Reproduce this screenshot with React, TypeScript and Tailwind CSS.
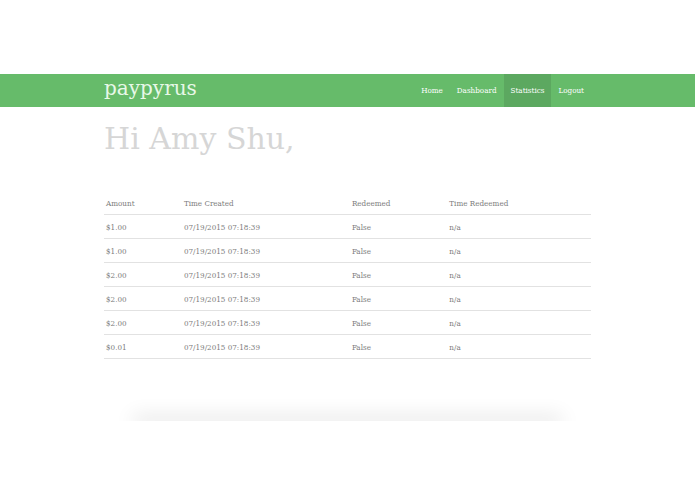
const NAV_LINKS = [
  { label: "Home", active: false },
  { label: "Dashboard", active: false },
  { label: "Statistics", active: true },
  { label: "Logout", active: false },
]

const COLUMNS = [
  { label: "Amount", width: "w-[16%]" },
  { label: "Time Created", width: "w-[34.5%]" },
  { label: "Redeemed", width: "w-[20%]" },
  { label: "Time Redeemed", width: "w-[29.5%]" },
]

const AMOUNTS = ["$1.00", "$1.00", "$2.00", "$2.00", "$2.00", "$0.01"]

const ROWS = AMOUNTS.map((amount) => ({
  amount,
  created: "07/19/2015 07:18:39",
  redeemed: "False",
  redeemedAt: "n/a",
}))

function Header() {
  return (
    <header className="bg-[#66bb6a] text-white">
      <div className="mx-auto flex max-w-[487px] justify-between">
        <a href="#" className="h-[33px] text-[20px] leading-[28px] text-[#e8f8e8]">
          paypyrus
        </a>
        <nav className="flex font-['DejaVu_Serif_Condensed','DejaVu_Serif',serif] text-[8px] leading-[33px]">
          {NAV_LINKS.map(({ label, active }) => (
            <a
              key={label}
              href="#"
              aria-current={active ? "page" : undefined}
              className={active ? "bg-[#5ca860] px-[7px]" : "px-[7px]"}
            >
              {label}
            </a>
          ))}
        </nav>
      </div>
    </header>
  )
}

function TransactionTable() {
  return (
    <table className="mt-8 w-full table-fixed border-collapse text-left font-['DejaVu_Serif_Condensed','DejaVu_Serif',serif] text-[8px] text-[#7c7c7c]">
      <thead>
        <tr className="h-6 border-b border-[#e2e2e2]">
          {COLUMNS.map(({ label, width }) => (
            <th key={label} scope="col" className={`${width} px-[2px] pt-1 font-normal`}>
              {label}
            </th>
          ))}
        </tr>
      </thead>
      <tbody>
        {ROWS.map((row, i) => (
          <tr key={i} className="h-6 border-b border-[#e2e2e2]">
            <td className="px-[2px] pt-1">{row.amount}</td>
            <td className="px-[2px] pt-1">{row.created}</td>
            <td className="px-[2px] pt-1">{row.redeemed}</td>
            <td className="px-[2px] pt-1">{row.redeemedAt}</td>
          </tr>
        ))}
      </tbody>
    </table>
  )
}

export default function App() {
  return (
    <div className="min-h-screen bg-white pt-[74px] font-['DejaVu_Serif',serif]">
      <Header />
      <main className="mx-auto max-w-[487px]">
        <h1 className="pt-[13px] text-[30px] leading-[38px] text-[#d6d6d6]">Hi Amy Shu,</h1>
        <TransactionTable />
        {/* Only the top of the footer's shadow shows */}
        <div className="mt-[22px] overflow-hidden px-8 pt-10">
          <div className="shadow-[0_0_20px_3px_rgba(0,0,0,0.2)]" />
        </div>
      </main>
    </div>
  )
}
